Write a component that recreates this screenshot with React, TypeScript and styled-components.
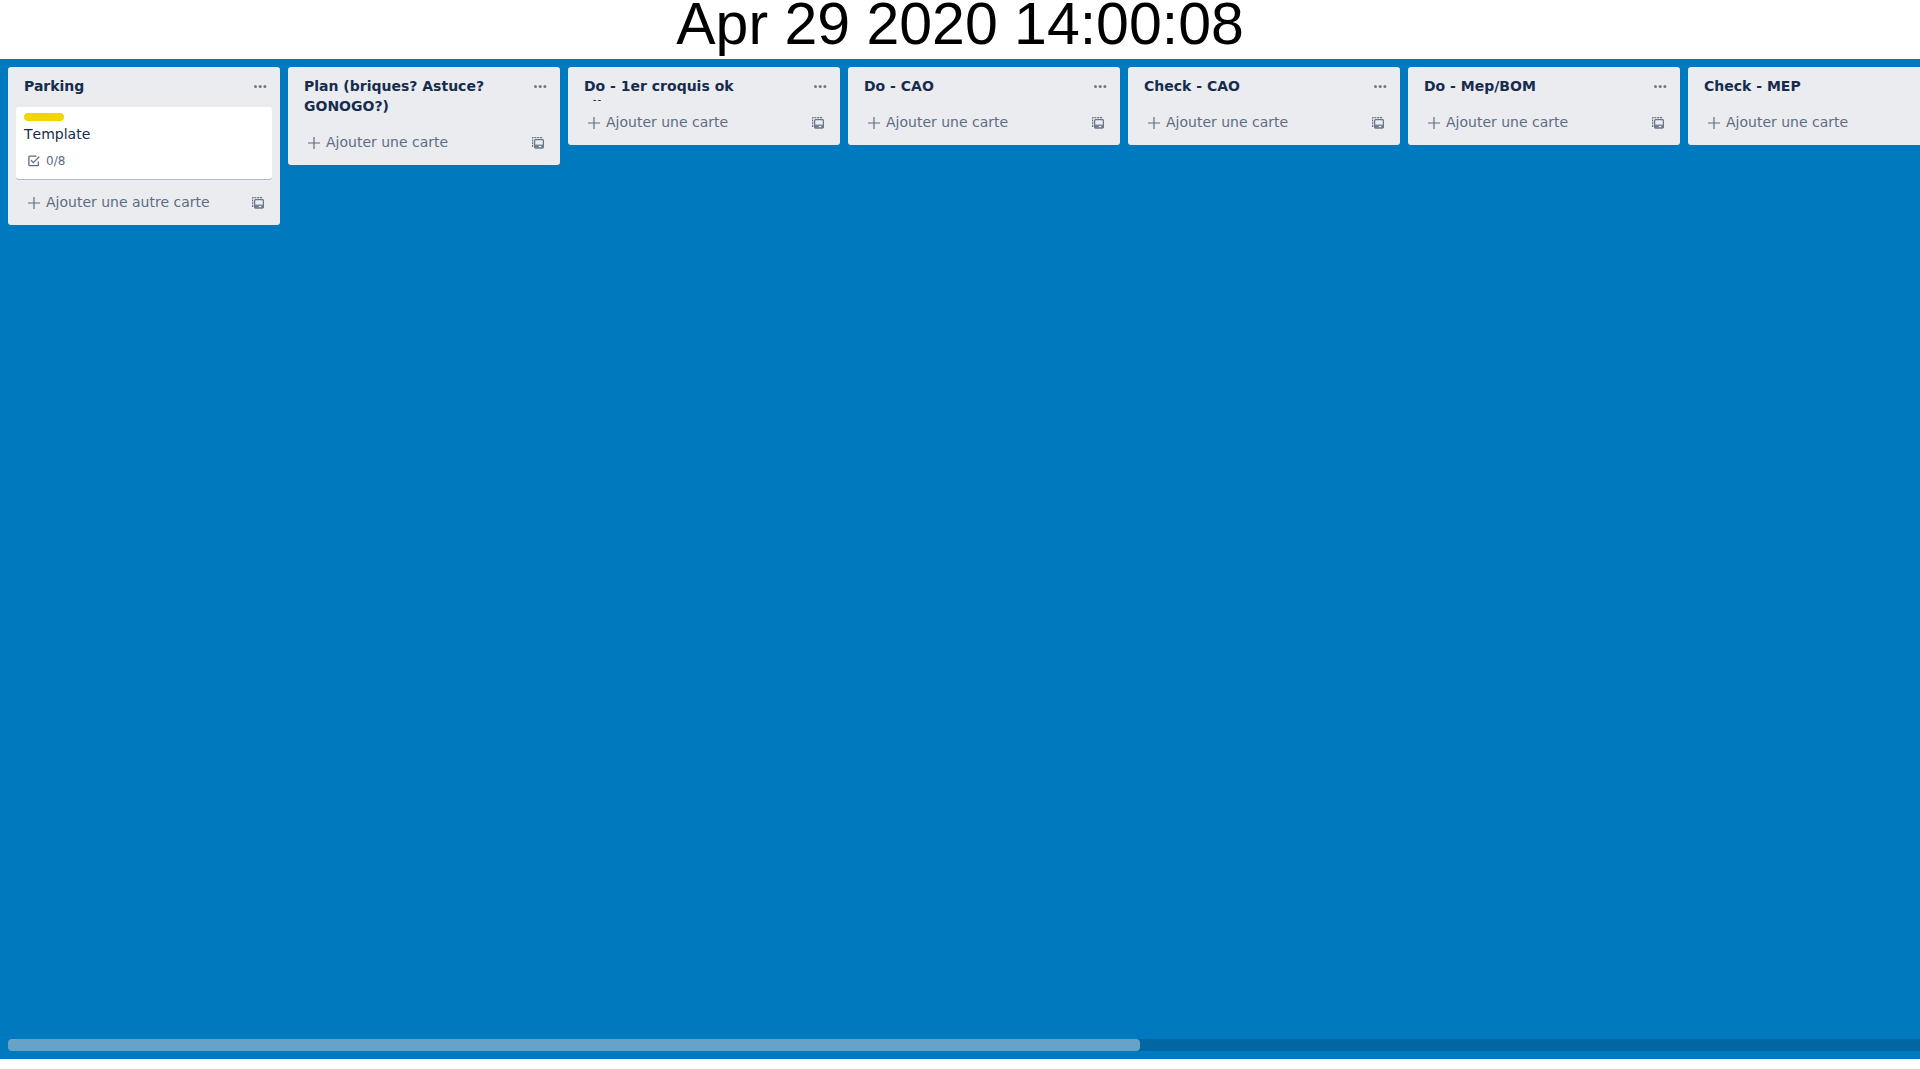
import React from "react";
import styled, { createGlobalStyle } from "styled-components";

const GlobalStyle = createGlobalStyle`
  *, *::before, *::after { box-sizing: border-box; }
  body {
    margin: 0;
    overflow: hidden;
    background: #fff;
    color: #172b4d;
    font-family: "DejaVu Sans", "Noto Sans", sans-serif;
    font-size: 14px;
    line-height: 20px;
  }
`;

const Page = styled.div`
  display: flex;
  flex-direction: column;
  height: 100vh;
  padding-bottom: 10px;
`;

const Clock = styled.header`
  flex: none;
  height: 59px;
  color: #000;
  font-family: "Liberation Sans", Arial, sans-serif;
  font-size: 59px;
  line-height: 48px;
  text-align: center;
`;

const Board = styled.main`
  display: flex;
  flex: 1;
  flex-direction: column;
  min-height: 0;
  padding: 8px 0 8px 8px;
  background: #0079bf;
`;

const Lists = styled.div`
  display: flex;
  flex: 1;
  align-items: flex-start;
  gap: 8px;
  min-height: 0;
  overflow: hidden;
`;

const ListPanel = styled.section`
  flex: none;
  width: 272px;
  border-radius: 3px;
  background: #ebecf0;
`;

const ListHeader = styled.div`
  display: flex;
  align-items: flex-start;
  padding: 6px 6px 6px 8px;
`;

const ListTitle = styled.h2<{ $lines: number }>`
  flex: 1;
  height: ${(p) => 8 + p.$lines * 20}px;
  margin: 0;
  padding: 3px 8px 5px;
  overflow: hidden;
  font-size: 14px;
  font-weight: 600;
  line-height: 20px;
  white-space: pre-line;
`;

const IconButton = styled.button`
  display: flex;
  flex: none;
  align-items: center;
  justify-content: center;
  width: 28px;
  height: 28px;
  padding: 0;
  border: 0;
  background: none;
  color: #6b778c;
  cursor: pointer;
`;

const Card = styled.article`
  margin: 0 8px 8px;
  padding: 6px 8px 8px;
  border-radius: 3px;
  background: #fff;
  box-shadow: 0 1px 0 rgba(9, 30, 66, 0.25);
`;

const CardLabel = styled.div`
  width: 40px;
  height: 8px;
  margin-bottom: 3px;
  border-radius: 4px;
  background: #f2d600;
`;

const CardTitle = styled.div`
  margin-bottom: 7px;
  font-kerning: none;
`;

const Badge = styled.div`
  display: flex;
  align-items: center;
  gap: 6px;
  padding-left: 4px;
  color: #5e6c84;
  font-size: 12px;
`;

const Composer = styled.div`
  display: flex;
  align-items: center;
  padding: 2px 8px 8px;
`;

const AddButton = styled.button`
  display: flex;
  flex: 1;
  align-items: center;
  gap: 6px;
  height: 28px;
  padding: 0 12px;
  border: 0;
  background: none;
  color: #5e6c84;
  font: inherit;
  text-align: left;
  cursor: pointer;
`;

const AddText = styled.span`
  padding-bottom: 2px;
`;

const ScrollTrack = styled.div`
  flex: none;
  height: 12px;
  border-radius: 4px 0 0 4px;
  background: rgba(0, 0, 0, 0.15);
`;

const ScrollThumb = styled.div`
  width: 59.2%;
  height: 100%;
  border-radius: 4px;
  background: rgba(255, 255, 255, 0.4);
`;

const DotsIcon = () => (
  <svg width="14" height="6" viewBox="0 0 14 6" fill="currentColor" aria-hidden="true">
    <circle cx="2.5" cy="2.5" r="1.5" />
    <circle cx="7.2" cy="2.5" r="1.5" />
    <circle cx="11.9" cy="2.5" r="1.5" />
  </svg>
);

const PlusIcon = () => (
  <svg width="12" height="12" viewBox="0 0 12 12" fill="none" stroke="currentColor" strokeWidth="1.2" aria-hidden="true">
    <path d="M6 0.4V11.6M0.4 6H11.6" strokeLinecap="round" />
  </svg>
);

const ChecklistIcon = () => (
  <svg width="12" height="12" viewBox="0 0 12 12" fill="none" stroke="currentColor" strokeWidth="1.3" aria-hidden="true">
    <path d="M8.4 1.2H1.6Q0.9 1.2 0.9 1.9V10Q0.9 10.7 1.6 10.7H9.6Q10.3 10.7 10.3 10V6.4" />
    <path d="M3 5.2L5.4 7.6L11.3 1.6" />
  </svg>
);

const TemplateIcon = () => (
  <svg width="12" height="12" viewBox="0 0 12 12" fill="none" stroke="currentColor" aria-hidden="true">
    <path d="M0.6 10V0.6H11" strokeWidth="1.2" strokeDasharray="2 0.8" />
    <rect x="2.6" y="2.6" width="8.8" height="8.4" rx="1" strokeWidth="1.3" />
    <path d="M3 8.2H11" strokeWidth="1.2" />
    <path d="M3 9.6H6.8M9.2 9.6H11" strokeWidth="1.8" />
  </svg>
);

interface CardData {
  title: string;
  checklist: string;
}

interface ListData {
  title: string;
  lines?: number;
  cards?: CardData[];
}

const lists: ListData[] = [
  { title: "Parking", cards: [{ title: "Template", checklist: "0/8" }] },
  { title: "Plan (briques? Astuce? GONOGO?)", lines: 2 },
  { title: "Do - 1er croquis ok\nclient" },
  { title: "Do - CAO" },
  { title: "Check - CAO" },
  { title: "Do - Mep/BOM" },
  { title: "Check - MEP" },
];

function List({ title, lines = 1, cards = [] }: ListData) {
  return (
    <ListPanel>
      <ListHeader>
        <ListTitle $lines={lines}>{title}</ListTitle>
        <IconButton type="button" aria-label="Menu de la liste">
          <DotsIcon />
        </IconButton>
      </ListHeader>
      {cards.map((card) => (
        <Card key={card.title}>
          <CardLabel />
          <CardTitle>{card.title}</CardTitle>
          <Badge>
            <ChecklistIcon />
            {card.checklist}
          </Badge>
        </Card>
      ))}
      <Composer>
        <AddButton type="button">
          <PlusIcon />
          <AddText>{cards.length ? "Ajouter une autre carte" : "Ajouter une carte"}</AddText>
        </AddButton>
        <IconButton type="button" aria-label="Créer à partir d’un modèle">
          <TemplateIcon />
        </IconButton>
      </Composer>
    </ListPanel>
  );
}

export default function App() {
  return (
    <>
      <GlobalStyle />
      <Page>
        <Clock>Apr 29 2020 14:00:08</Clock>
        <Board>
          <Lists>
            {lists.map((list) => (
              <List key={list.title} {...list} />
            ))}
          </Lists>
          <ScrollTrack>
            <ScrollThumb />
          </ScrollTrack>
        </Board>
      </Page>
    </>
  );
}
